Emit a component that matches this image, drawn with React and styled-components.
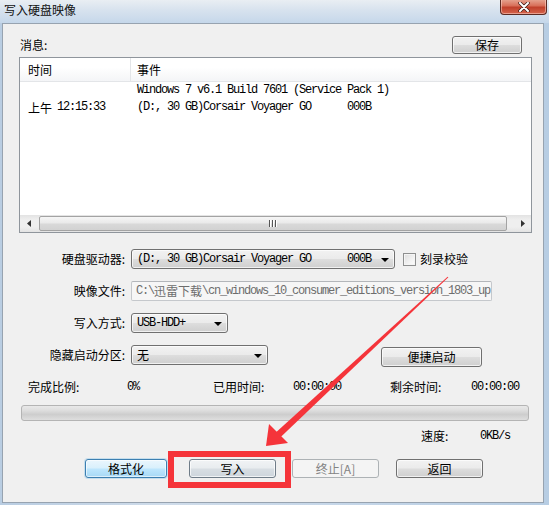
import React from "react";
import styled, { createGlobalStyle, css } from "styled-components";

const Global = createGlobalStyle`
  html, body { margin: 0; padding: 0; background: #dfe8f1; }
  body { font-family: "Noto Sans CJK SC", "Noto Sans", sans-serif; font-size: 12px; color: #000; }
`;

const CJK = `"Noto Sans CJK SC", "Noto Sans", sans-serif`;
const MONO = `"Liberation Mono", "Noto Sans CJK SC", monospace`;

const Window = styled.div`
  position: relative;
  width: 549px;
  height: 505px;
  overflow: hidden;
  background: linear-gradient(90deg, #b9cde2 0%, #cfdcea 30%, #c6d7e9 60%, #b7cde3 100%);
  display: flex;
  flex-direction: column;
`;

const TitleBar = styled.div`
  height: 23px;
  display: flex;
  align-items: flex-start;
  background: linear-gradient(180deg, #e9eef3 0%, #d7e2ee 45%, #c5d7ea 100%);
`;

const Title = styled.div`
  font-family: ${CJK};
  font-size: 12px;
  line-height: 16px;
  margin: 2px 0 0 4px;
  color: #111;
`;

const CloseBtn = styled.div`
  margin: -1px 2px 0 auto;
  width: 45px;
  height: 15px;
  border: 1px solid #5b2a22;
  border-top: none;
  border-radius: 0 0 4px 4px;
  background: linear-gradient(180deg, #e7a895 0%, #d86f59 45%, #c0402b 55%, #d5644c 100%);
  box-shadow: inset 0 0 0 1px rgba(255, 220, 210, 0.5);
  display: flex;
  align-items: center;
  justify-content: center;
`;

const Panel = styled.div`
  margin: 0 5px 0 2px;
  height: 480px;
  box-sizing: border-box;
  background: #f0f0f0;
  border: 1px solid #97a3b0;
  padding: 12px 11px 0 16px;
  display: flex;
  flex-direction: column;
`;

const HeaderRow = styled.div`
  height: 18px;
  display: flex;
  align-items: center;
  justify-content: space-between;
  padding-right: 10px;
`;

const Text = styled.span`
  font-family: ${CJK};
  font-size: 12px;
  line-height: 16px;
  white-space: pre;
  color: ${(p) => p.$color || "#000"};
`;

const Mono = styled.span`
  font-family: ${MONO};
  font-size: 12px;
  letter-spacing: -1.2px;
  white-space: pre;
  color: ${(p) => p.$color || "#000"};
`;

const buttonBase = css`
  box-sizing: border-box;
  height: ${(p) => p.$h || 19}px;
  width: ${(p) => p.$w}px;
  border: 1px solid #707070;
  border-radius: 3px;
  background: linear-gradient(180deg, #f2f2f2 0%, #ebebeb 48%, #dddddd 52%, #cfcfcf 100%);
  box-shadow: inset 0 0 0 1px rgba(255, 255, 255, 0.7);
  display: flex;
  align-items: center;
  justify-content: center;
  font-family: ${CJK};
  font-size: 12px;
  line-height: 16px;
  color: #000;
  padding: 0;
`;

const Button = styled.div`
  ${buttonBase}
  margin-left: ${(p) => p.$ml || 0}px;
  margin-top: ${(p) => p.$mt || 0}px;
  ${(p) =>
    p.$focus &&
    css`
      border-color: #3c7fb1;
      background: linear-gradient(180deg, #eaf6fd 0%, #d9f0fc 48%, #bee6fd 52%, #a7d9f5 100%);
      box-shadow: inset 0 0 0 1px rgba(255, 255, 255, 0.6), 0 0 0 1px rgba(120, 190, 230, 0.35);
    `}
  ${(p) =>
    p.$soft &&
    css`
      border-color: #6f7c88;
      background: linear-gradient(180deg, #f1f3f5 0%, #e8ecef 48%, #d8dee3 52%, #cdd5dc 100%);
    `}
  ${(p) =>
    p.$disabled &&
    css`
      border-color: #adb2b5;
      background: #f4f4f4;
      box-shadow: none;
      color: #838383;
    `}
`;

const ListView = styled.div`
  margin-top: 3px;
  width: 513px;
  height: 176px;
  box-sizing: border-box;
  border: 1px solid #8f959c;
  background: #fff;
  display: flex;
  flex-direction: column;
`;

const ListHeader = styled.div`
  height: 24px;
  box-sizing: border-box;
  display: flex;
  background: linear-gradient(180deg, #ffffff 0%, #ffffff 40%, #f4f5f7 100%);
  border-bottom: 1px solid #e3e5e8;
`;

const HeadCell = styled.div`
  box-sizing: border-box;
  width: ${(p) => (p.$w ? `${p.$w}px` : "auto")};
  flex: ${(p) => (p.$w ? "none" : 1)};
  padding-left: ${(p) => p.$pl}px;
  display: flex;
  align-items: center;
  border-right: ${(p) => (p.$w ? "1px solid #e3e5e8" : "none")};
`;

const ListBody = styled.div`
  flex: 1;
  display: flex;
  align-items: flex-start;
`;

const TimeCell = styled.div`
  width: 111px;
  box-sizing: border-box;
  padding: 17px 0 0 8px;
  line-height: 17px;
  display: flex;
  align-items: center;
  gap: 5px;
`;

const EventCell = styled.div`
  padding-left: 6px;
  display: flex;
  flex-direction: column;
  line-height: 17px;
`;

const HScroll = styled.div`
  height: 17px;
  display: flex;
  align-items: center;
  background: linear-gradient(180deg, #e3e3e3 0%, #efefef 30%, #efefef 70%, #e3e3e3 100%);
`;

const ScrollArrow = styled.div`
  width: 17px;
  height: 17px;
  display: flex;
  align-items: center;
  justify-content: center;
  margin-left: ${(p) => (p.$end ? "auto" : "0")};
`;

const Thumb = styled.div`
  margin-left: 2px;
  width: 468px;
  height: 15px;
  box-sizing: border-box;
  border: 1px solid #a3a3a3;
  border-radius: 2px;
  background: linear-gradient(180deg, #f6f6f6 0%, #e9e9e9 48%, #d9d9d9 52%, #d2d2d2 100%);
  display: flex;
  align-items: center;
  justify-content: center;
`;

const Grip = styled.div`
  display: flex;
  gap: 1px;
  & > i {
    display: block;
    width: 1px;
    height: 7px;
    background: #555;
    border-right: 1px solid #fff;
  }
`;

const Form = styled.div`
  margin-top: 16px;
  display: flex;
  flex-direction: column;
  gap: 12px;
`;

const FieldRow = styled.div`
  display: flex;
  align-items: flex-start;
  height: 20px;
`;

const FieldLabel = styled.div`
  width: 106px;
  height: 20px;
  display: flex;
  align-items: center;
  justify-content: flex-end;
  margin-right: 6px;
  font-family: ${CJK};
  font-size: 12px;
  line-height: 16px;
`;

const Select = styled.div`
  ${buttonBase}
  width: ${(p) => p.$w}px;
  height: 20px;
  justify-content: space-between;
  padding: 0 5px 0 5px;
`;

const Caret = styled.span`
  width: 0;
  height: 0;
  border-left: 4px solid transparent;
  border-right: 4px solid transparent;
  border-top: 4px solid #000;
  margin-top: 1px;
`;

const TextBox = styled.div`
  box-sizing: border-box;
  width: ${(p) => p.$w}px;
  height: 20px;
  border: 1px solid #c5c8cc;
  border-top-color: #b3b6ba;
  border-radius: 2px;
  background: #f6f6f6;
  display: flex;
  align-items: center;
  padding-left: 4px;
  overflow: hidden;
`;

const CheckWrap = styled.label`
  display: flex;
  align-items: center;
  gap: 4px;
  margin-left: 8px;
  height: 20px;
`;

const CheckBox = styled.span`
  width: 13px;
  height: 13px;
  box-sizing: border-box;
  border: 1px solid #8e8f8f;
  background: linear-gradient(135deg, #dcdcdc 0%, #f2f2f2 60%, #fdfdfd 100%);
  box-shadow: inset 0 0 0 1px #f4f4f4;
`;

const StatsRow = styled.div`
  margin-top: 14px;
  height: 16px;
  display: flex;
  align-items: center;
  padding-left: 9px;
`;

const StatCell = styled.div`
  width: ${(p) => p.$w}px;
  flex: none;
  display: flex;
  align-items: center;
`;

const Progress = styled.div`
  margin: 10px 0 0 2px;
  width: 508px;
  height: 16px;
  box-sizing: border-box;
  border: 1px solid #b4b4b4;
  border-radius: 3px;
  background: linear-gradient(180deg, #e9e9e9 0%, #dcdcdc 35%, #cdcdcd 60%, #dedede 100%);
`;

const SpeedRow = styled.div`
  margin-top: 7px;
  height: 16px;
  display: flex;
  align-items: center;
  padding-left: 402px;
`;

const ButtonRow = styled.div`
  margin-top: 15px;
  display: flex;
  align-items: center;
  padding-left: 66px;
`;

const Highlight = styled.div`
  position: absolute;
  left: 168px;
  top: 451px;
  width: 123px;
  height: 37px;
  box-sizing: border-box;
  border: 6px solid #f5343a;
  pointer-events: none;
`;

const Overlay = styled.svg`
  position: absolute;
  left: 0;
  top: 0;
  pointer-events: none;
`;

export default function App() {
  return (
    <Window>
      <Global />
      <TitleBar>
        <Title>写入硬盘映像</Title>
        <CloseBtn>
          <svg width="12" height="10" viewBox="0 0 12 10">
            <path d="M2 1 L10 9 M10 1 L2 9" stroke="#3a1a14" strokeWidth="3.4" strokeLinecap="round" />
            <path d="M2 1 L10 9 M10 1 L2 9" stroke="#fff" strokeWidth="2" strokeLinecap="round" />
          </svg>
        </CloseBtn>
      </TitleBar>
      <Panel>
        <HeaderRow>
          <Text style={{ marginLeft: 1 }}>消息:</Text>
          <Button $w={70} $h={18}>保存</Button>
        </HeaderRow>
        <ListView>
          <ListHeader>
            <HeadCell $w={111} $pl={8}><Text>时间</Text></HeadCell>
            <HeadCell $pl={6}><Text>事件</Text></HeadCell>
          </ListHeader>
          <ListBody>
            <TimeCell>
              <Text>上午</Text>
              <Mono>12:15:33</Mono>
            </TimeCell>
            <EventCell>
              <Mono>Windows 7 v6.1 Build 7601 (Service Pack 1)</Mono>
              <Mono>(D:, 30 GB)Corsair Voyager GO      000B</Mono>
            </EventCell>
          </ListBody>
          <HScroll>
            <ScrollArrow>
              <svg width="4" height="7" viewBox="0 0 4 7"><path d="M4 0 L0 3.5 L4 7 Z" fill="#333" /></svg>
            </ScrollArrow>
            <Thumb>
              <Grip><i /><i /><i /></Grip>
            </Thumb>
            <ScrollArrow $end>
              <svg width="4" height="7" viewBox="0 0 4 7"><path d="M0 0 L4 3.5 L0 7 Z" fill="#333" /></svg>
            </ScrollArrow>
          </HScroll>
        </ListView>

        <Form>
          <FieldRow>
            <FieldLabel>硬盘驱动器:</FieldLabel>
            <Select $w={264}>
              <Mono>(D:, 30 GB)Corsair Voyager GO      000B</Mono>
              <Caret />
            </Select>
            <CheckWrap>
              <CheckBox />
              <Text>刻录校验</Text>
            </CheckWrap>
          </FieldRow>
          <FieldRow>
            <FieldLabel>映像文件:</FieldLabel>
            <TextBox $w={361}>
              <Mono $color="#6d6d6d">C:\</Mono>
              <Text $color="#6d6d6d">迅雷下载</Text>
              <Mono $color="#6d6d6d">\cn_windows_10_consumer_editions_version_1803_up</Mono>
            </TextBox>
          </FieldRow>
          <FieldRow>
            <FieldLabel>写入方式:</FieldLabel>
            <Select $w={97}>
              <Mono>USB-HDD+</Mono>
              <Caret />
            </Select>
          </FieldRow>
          <FieldRow>
            <FieldLabel>隐藏启动分区:</FieldLabel>
            <Select $w={137}>
              <Text>无</Text>
              <Caret />
            </Select>
            <Button $w={101} $h={20} $ml={113} $mt={2}>便捷启动</Button>
          </FieldRow>
        </Form>

        <StatsRow>
          <StatCell $w={99}><Text>完成比例:</Text></StatCell>
          <StatCell $w={86}><Mono>0%</Mono></StatCell>
          <StatCell $w={80}><Text>已用时间:</Text></StatCell>
          <StatCell $w={97}><Mono>00:00:00</Mono></StatCell>
          <StatCell $w={81}><Text>剩余时间:</Text></StatCell>
          <StatCell $w={60}><Mono>00:00:00</Mono></StatCell>
        </StatsRow>

        <Progress />

        <SpeedRow>
          <StatCell $w={59}><Text>速度:</Text></StatCell>
          <StatCell $w={50}><Mono>0KB/s</Mono></StatCell>
        </SpeedRow>

        <ButtonRow>
          <Button $w={82} $focus>格式化</Button>
          <Button $w={87} $ml={22} $soft>写入</Button>
          <Button $w={87} $ml={16} $disabled>终止[A]</Button>
          <Button $w={87} $ml={17}>返回</Button>
        </ButtonRow>
      </Panel>

      <Highlight />
      <Overlay width="549" height="505" viewBox="0 0 549 505">
        <polygon points="448.4,277.3 280.2,437.4 275.8,432.6 447.6,276.7" fill="#f5343a" />
        <polygon points="266,446 269,424 288,443" fill="#f5343a" />
      </Overlay>
    </Window>
  );
}
